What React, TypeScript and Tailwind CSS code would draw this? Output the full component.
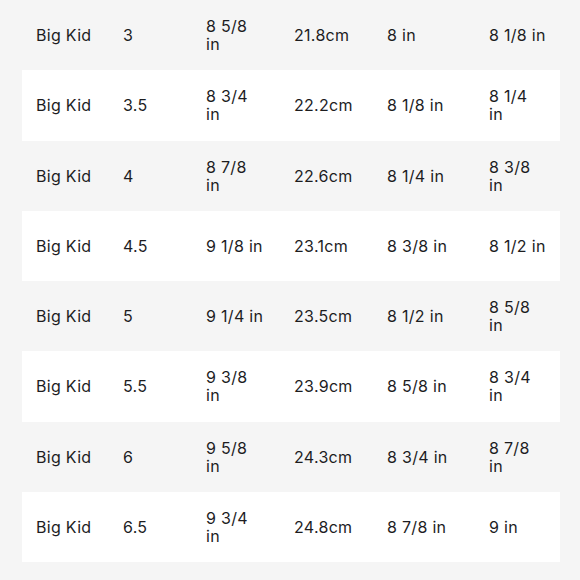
import React from 'react'

const rows: string[][] = [
  ['Big Kid', '3', '8 5/8\nin', '21.8cm', '8 in', '8 1/8 in'],
  ['Big Kid', '3.5', '8 3/4\nin', '22.2cm', '8 1/8 in', '8 1/4\nin'],
  ['Big Kid', '4', '8 7/8\nin', '22.6cm', '8 1/4 in', '8 3/8\nin'],
  ['Big Kid', '4.5', '9 1/8 in', '23.1cm', '8 3/8 in', '8 1/2 in'],
  ['Big Kid', '5', '9 1/4 in', '23.5cm', '8 1/2 in', '8 5/8\nin'],
  ['Big Kid', '5.5', '9 3/8\nin', '23.9cm', '8 5/8 in', '8 3/4\nin'],
  ['Big Kid', '6', '9 5/8\nin', '24.3cm', '8 3/4 in', '8 7/8\nin'],
  ['Big Kid', '6.5', '9 3/4\nin', '24.8cm', '8 7/8 in', '9 in'],
]

export default function App() {
  return (
    <div
      className="w-[580px] h-[580px] overflow-hidden bg-[#f5f5f5] pl-[22px] pr-[20px] text-[16px] leading-[18px] tracking-[0.3px] text-[#1d1d1f]"
      style={{ fontFamily: 'Inter, "Noto Sans", sans-serif' }}
    >
      {rows.map((row, i) => (
        <div
          key={i}
          className={`grid grid-cols-[87px_83px_88px_93px_102px_1fr] items-center h-[70.25px] ${
            i % 2 === 1 ? 'bg-white' : ''
          }`}
        >
          {row.map((cell, j) => (
            <div key={j} className="pl-[14px] whitespace-pre-line">
              {cell}
            </div>
          ))}
        </div>
      ))}
    </div>
  )
}
